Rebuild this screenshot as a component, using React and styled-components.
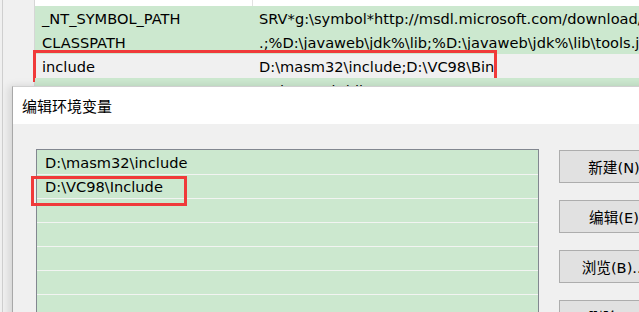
import styled, { createGlobalStyle } from 'styled-components'

const GlobalStyle = createGlobalStyle`
  html, body {
    margin: 0;
    padding: 0;
    background: #f0f0f0;
    overflow: hidden;
  }
  body {
    font-family: "DejaVu Sans", "Noto Sans CJK SC", sans-serif;
    font-size: 14.6px;
    color: #000;
  }
`

const Desktop = styled.div`
  position: relative;
  width: 639px;
  height: 312px;
  overflow: hidden;
  background: #f0f0f0;
`

const EnvWindow = styled.div`
  display: flex;
  height: 100%;
`

const SideStrip = styled.div`
  width: 35px;
  flex: none;
  background: #f0f0f0;
  border-right: 1px solid #d6d6d6;
  box-sizing: border-box;
  position: relative;
  &::before {
    content: '';
    position: absolute;
    left: 2px;
    top: 0;
    bottom: 0;
    width: 1px;
    background: #cfcfcf;
  }
`

const VarTable = styled.div`
  flex: 1;
  display: flex;
  flex-direction: column;
  min-width: 0;
`

const HeaderGap = styled.div`
  height: 6px;
  display: flex;
  background: #fff;
  & > div:first-child {
    width: 217px;
    border-right: 1px solid #e2e2e2;
  }
`

const VarRow = styled.div`
  position: relative;
  display: flex;
  height: 24px;
  line-height: 25px;
  background: ${(p) => (p.$selected ? '#f0f0f0' : '#cce8cf')};
  white-space: nowrap;
`

const NameCell = styled.div`
  width: 210px;
  flex: none;
  padding-left: 7px;
`

const ValueCell = styled.div`
  padding-left: 7px;
  overflow: hidden;
`

const Mark = styled.div`
  position: absolute;
  left: ${(p) => p.$left}px;
  top: ${(p) => p.$top}px;
  width: ${(p) => p.$width}px;
  height: ${(p) => p.$height}px;
  border: 3px solid #f03a3a;
  box-sizing: border-box;
  pointer-events: none;
`

const Dialog = styled.div`
  position: absolute;
  left: 12px;
  top: 86px;
  width: 700px;
  height: 320px;
  background: #f0f0f0;
  border: 1px solid #a8a8a8;
  border-top-color: #d0d0d0;
  box-shadow: -3px 0 8px rgba(0, 0, 0, 0.12);
  display: flex;
  flex-direction: column;
`

const TitleBar = styled.div`
  height: 37px;
  background: #fff;
  display: flex;
  align-items: center;
  padding-left: 9px;
  font-family: "Noto Sans CJK SC", sans-serif;
  font-size: 15px;
`

const DialogBody = styled.div`
  display: flex;
  gap: 20px;
  padding: 25px 0 0 23px;
`

const PathList = styled.div`
  width: 501px;
  height: 200px;
  border: 1px solid #828790;
  background: #cce8cf;
  padding-top: 1px;
  display: flex;
  flex-direction: column;
`

const PathRow = styled.div`
  position: relative;
  height: 24px;
  line-height: 24px;
  padding-left: 8px;
  border-bottom: 1px solid #f2f4f2;
  box-sizing: border-box;
  flex: none;
  white-space: nowrap;
`

const ButtonColumn = styled.div`
  display: flex;
  flex-direction: column;
  gap: 17px;
  padding-top: 1px;
`

const ActionButton = styled.div`
  width: 110px;
  height: 33px;
  box-sizing: border-box;
  background: #e1e1e1;
  border: 1px solid #adadad;
  display: flex;
  align-items: center;
  justify-content: center;
  white-space: nowrap;
`

const vars = [
  { name: '_NT_SYMBOL_PATH', value: 'SRV*g:\\symbol*http://msdl.microsoft.com/download/symbols' },
  { name: 'CLASSPATH', value: '.;%D:\\javaweb\\jdk%\\lib;%D:\\javaweb\\jdk%\\lib\\tools.jar' },
  { name: 'include', value: 'D:\\masm32\\include;D:\\VC98\\Bin', selected: true },
  { name: 'JAVA_HOME', value: 'D:\\javaweb\\jdk' },
  { name: 'lib', value: 'D:\\masm32\\lib' },
]

const paths = ['D:\\masm32\\include', 'D:\\VC98\\Include', '', '', '', '', '', '']

const buttons = ['新建(N)', '编辑(E)', '浏览(B)...', '删除(D)']

const App = () => {
  return (
    <Desktop>
      <GlobalStyle />
      <EnvWindow>
        <SideStrip />
        <VarTable>
          <HeaderGap>
            <div />
          </HeaderGap>
          {vars.map((v) => (
            <VarRow key={v.name} $selected={v.selected}>
              <NameCell>{v.name}</NameCell>
              <ValueCell>{v.value}</ValueCell>
              {v.selected && <Mark $left={-2} $top={-4} $width={464} $height={32} />}
            </VarRow>
          ))}
        </VarTable>
      </EnvWindow>
      <Dialog>
        <TitleBar>编辑环境变量</TitleBar>
        <DialogBody>
          <PathList>
            {paths.map((p, i) => (
              <PathRow key={i}>
                {p}
                {i === 1 && <Mark $left={-6} $top={1} $width={156} $height={30} />}
              </PathRow>
            ))}
          </PathList>
          <ButtonColumn>
            {buttons.map((b) => (
              <ActionButton key={b}>{b}</ActionButton>
            ))}
          </ButtonColumn>
        </DialogBody>
      </Dialog>
    </Desktop>
  )
}

export default App
